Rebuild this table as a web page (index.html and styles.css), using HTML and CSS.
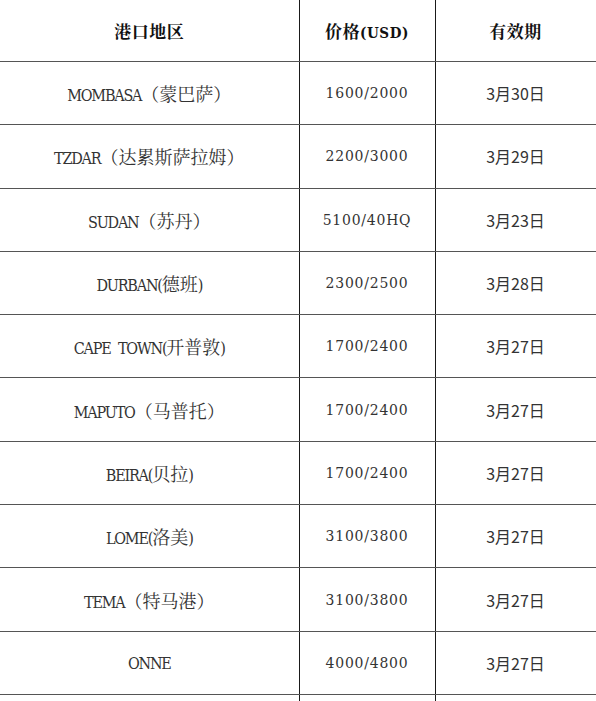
FILE: index.html
```html
<!DOCTYPE html>
<html lang="zh-CN">
<head>
<meta charset="utf-8">
<title>港口价格</title>
<link rel="stylesheet" href="styles.css">
</head>
<body>
<table class="rates">
  <colgroup>
    <col class="c-port">
    <col class="c-price">
    <col class="c-date">
  </colgroup>
  <thead>
    <tr class="head">
      <th><span class="zh">港口地区</span></th>
      <th><span class="zh">价格</span><span class="en">(USD)</span></th>
      <th><span class="zh">有效期</span></th>
    </tr>
  </thead>
  <tbody>
    <tr><td><span class="en">MOMBASA</span><span class="zh">（蒙巴萨）</span></td><td class="price">1600/2000</td><td class="date">3月30日</td></tr>
    <tr><td><span class="en">TZDAR</span><span class="zh">（达累斯萨拉姆）</span></td><td class="price">2200/3000</td><td class="date">3月29日</td></tr>
    <tr><td><span class="en">SUDAN</span><span class="zh">（苏丹）</span></td><td class="price">5100/40HQ</td><td class="date">3月23日</td></tr>
    <tr><td><span class="en">DURBAN(</span><span class="zh">德班</span><span class="en">)</span></td><td class="price">2300/2500</td><td class="date">3月28日</td></tr>
    <tr><td><span class="en">CAPE TOWN(</span><span class="zh">开普敦</span><span class="en">)</span></td><td class="price">1700/2400</td><td class="date">3月27日</td></tr>
    <tr><td><span class="en">MAPUTO</span><span class="zh">（马普托）</span></td><td class="price">1700/2400</td><td class="date">3月27日</td></tr>
    <tr><td><span class="en">BEIRA(</span><span class="zh">贝拉</span><span class="en">)</span></td><td class="price">1700/2400</td><td class="date">3月27日</td></tr>
    <tr><td><span class="en">LOME(</span><span class="zh">洛美</span><span class="en">)</span></td><td class="price">3100/3800</td><td class="date">3月27日</td></tr>
    <tr><td><span class="en">TEMA</span><span class="zh">（特马港）</span></td><td class="price">3100/3800</td><td class="date">3月27日</td></tr>
    <tr><td><span class="en">ONNE</span></td><td class="price">4000/4800</td><td class="date">3月27日</td></tr>
    <tr><td></td><td></td><td></td></tr>
  </tbody>
</table>
</body>
</html>
```

FILE: styles.css
```css
html, body {
  margin: 0;
  padding: 0;
  background: #ffffff;
}

body {
  font-family: "Noto Serif CJK SC", serif;
  color: #333333;
  overflow: hidden;
}

.rates {
  border-collapse: collapse;
  table-layout: fixed;
  width: 596px;
}

.c-port { width: 299px; }
.c-price { width: 136px; }
.c-date { width: 161px; }

.rates th,
.rates td {
  padding: 0;
  text-align: center;
  vertical-align: middle;
  border-bottom: 1px solid #555555;
  border-right: 1px solid #1a1a1a;
  white-space: nowrap;
}

.head th {
  height: 61px;
  color: #111111;
  font-weight: 700;
}

.rates tbody tr {
  height: 63.3px;
}

.en {
  font-family: "DejaVu Serif Condensed", "DejaVu Serif", serif;
  font-size: 16px;
  letter-spacing: -1.2px;
  word-spacing: 4px;
}

.price {
  font-family: "DejaVu Serif Condensed", "DejaVu Serif", serif;
  font-size: 15.5px;
  letter-spacing: 0.8px;
}

.zh {
  font-family: "Noto Serif CJK SC", serif;
  font-size: 18px;
}

.head .zh {
  font-family: "Noto Serif CJK SC", serif;
  font-size: 17px;
  font-weight: 700;
  letter-spacing: 0.5px;
}

.head .en {
  font-size: 15px;
  font-weight: 700;
  letter-spacing: 0.6px;
}

.date {
  font-family: "Noto Sans CJK SC", sans-serif;
  font-size: 16px;
}
```
